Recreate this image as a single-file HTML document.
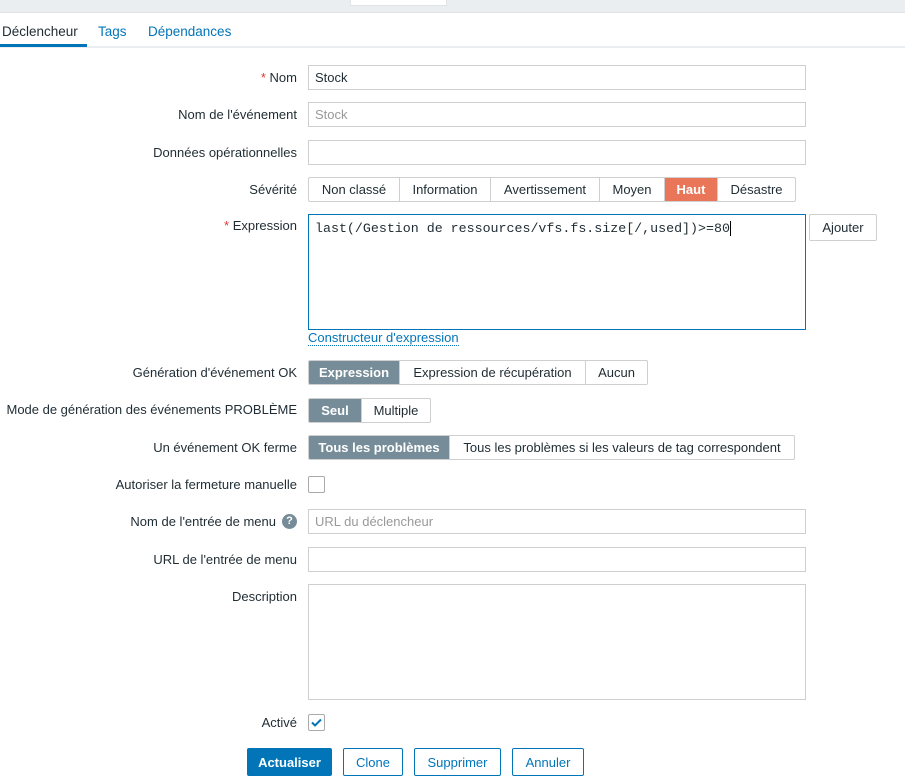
<!DOCTYPE html>
<html><head><meta charset="utf-8"><style>
*{box-sizing:border-box;margin:0;padding:0}
body{width:905px;height:774px;overflow:hidden;background:#fff;font-family:"Liberation Sans",sans-serif;font-size:13px;color:#1f2c33;position:relative}
.a{position:absolute}
.lbl{position:absolute;right:608px;text-align:right;white-space:nowrap;line-height:14px}
.inp{position:absolute;left:308px;width:498px;height:25px;border:1px solid #cfcfcf;padding:0 6px;line-height:23px;background:#fff}
.seg{position:absolute;display:flex;height:25px;border:1px solid #cfcfcf;border-radius:2px;overflow:hidden}
.seg div{border-left:1px solid #cfcfcf;display:flex;align-items:center;justify-content:center;height:100%;white-space:nowrap}
.seg div:first-child{border-left:none}
.sel{background:#768d99;color:#fff;font-weight:bold}
.cb{position:absolute;left:308px;width:17px;height:17px;border:1px solid #aaa;border-radius:2px;background:#fff}
.btn{position:absolute;top:748px;height:28px;border:1px solid #0275b8;color:#0275b8;display:flex;align-items:center;justify-content:center;border-radius:2px;background:#fff}
.req:before{content:"* ";color:#e33734}
</style></head><body>
<div class="a" style="left:0;top:0;width:905px;height:13px;background:#ebeef0;border-bottom:1px solid #dfe4e7"></div>
<div class="a" style="left:350px;top:0;width:97px;height:6px;background:#fff;border:1px solid #dfe4e7;border-top:none"></div>
<div class="a" style="left:0;top:46px;width:905px;height:2px;background:#ebeef0"></div>
<div class="a" style="left:0;top:44px;width:87px;height:3px;background:#0275b8"></div>
<div class="a" style="left:2px;top:24px;font-size:13.5px">Déclencheur</div>
<div class="a" style="left:98px;top:24px;font-size:13.5px;color:#0275b8">Tags</div>
<div class="a" style="left:148px;top:24px;font-size:13.5px;color:#0275b8">Dépendances</div>

<div class="lbl req" style="top:71px">Nom</div>
<div class="inp" style="top:65px">Stock</div>
<div class="lbl" style="top:108px">Nom de l'événement</div>
<div class="inp" style="top:102px;color:#999">Stock</div>
<div class="lbl" style="top:146px">Données opérationnelles</div>
<div class="inp" style="top:140px"></div>
<div class="lbl" style="top:183px">Sévérité</div>
<div class="seg" style="left:308px;top:177px;width:488px">
<div style="width:90px">Non classé</div><div style="width:91px">Information</div><div style="width:109px">Avertissement</div><div style="width:65px">Moyen</div><div style="width:53px;background:#e97659;color:#fff;font-weight:bold">Haut</div><div style="flex:1">Désastre</div></div>
<div class="lbl req" style="top:219px">Expression</div>
<div class="a" style="left:308px;top:214px;width:498px;height:116px;border:1px solid #0275b8;padding:6px;font-family:'Liberation Mono',monospace;font-size:13.3px;white-space:nowrap">last(/Gestion de ressources/vfs.fs.size[/,used])&gt;=80<span style="border-left:1px solid #000"></span></div>
<div class="btn" style="left:809px;top:214px;width:68px;height:27px;border-color:#cfcfcf;color:#1f2c33">Ajouter</div>
<div class="a" style="left:308px;top:331px;color:#0275b8;border-bottom:1px dotted #0275b8;line-height:14px">Constructeur d'expression</div>

<div class="lbl" style="top:366px">Génération d'événement OK</div>
<div class="seg" style="left:308px;top:360px;width:340px"><div class="sel" style="width:90px">Expression</div><div style="width:186px">Expression de récupération</div><div style="flex:1">Aucun</div></div>
<div class="lbl" style="top:403px">Mode de génération des événements PROBLÈME</div>
<div class="seg" style="left:308px;top:398px;width:123px"><div class="sel" style="width:52px">Seul</div><div style="flex:1">Multiple</div></div>
<div class="lbl" style="top:441px">Un événement OK ferme</div>
<div class="seg" style="left:308px;top:435px;width:487px"><div class="sel" style="width:140px">Tous les problèmes</div><div style="flex:1">Tous les problèmes si les valeurs de tag correspondent</div></div>
<div class="lbl" style="top:478px">Autoriser la fermeture manuelle</div>
<div class="cb" style="top:476px"></div>
<div class="lbl" style="top:515px;right:629px">Nom de l'entrée de menu</div>
<div class="a" style="left:282px;top:514px;width:15px;height:15px;border-radius:50%;background:#768d99;color:#fff;font-weight:bold;font-size:11px;text-align:center;line-height:15px">?</div>
<div class="inp" style="top:509px;color:#999">URL du déclencheur</div>
<div class="lbl" style="top:553px">URL de l'entrée de menu</div>
<div class="inp" style="top:547px"></div>
<div class="lbl" style="top:590px">Description</div>
<div class="inp" style="top:584px;height:116px"></div>
<div class="lbl" style="top:716px">Activé</div>
<div class="cb" style="top:714px"><svg width="15" height="15" viewBox="0 0 15 15" style="position:absolute;left:0;top:0"><path d="M3 7.5l3 3 6-6" stroke="#0275b8" stroke-width="2" fill="none"/></svg></div>

<div class="btn" style="left:247px;width:85px;background:#0275b8;color:#fff;font-weight:bold">Actualiser</div>
<div class="btn" style="left:343px;width:60px">Clone</div>
<div class="btn" style="left:414px;width:87px">Supprimer</div>
<div class="btn" style="left:512px;width:72px">Annuler</div>
</body></html>
